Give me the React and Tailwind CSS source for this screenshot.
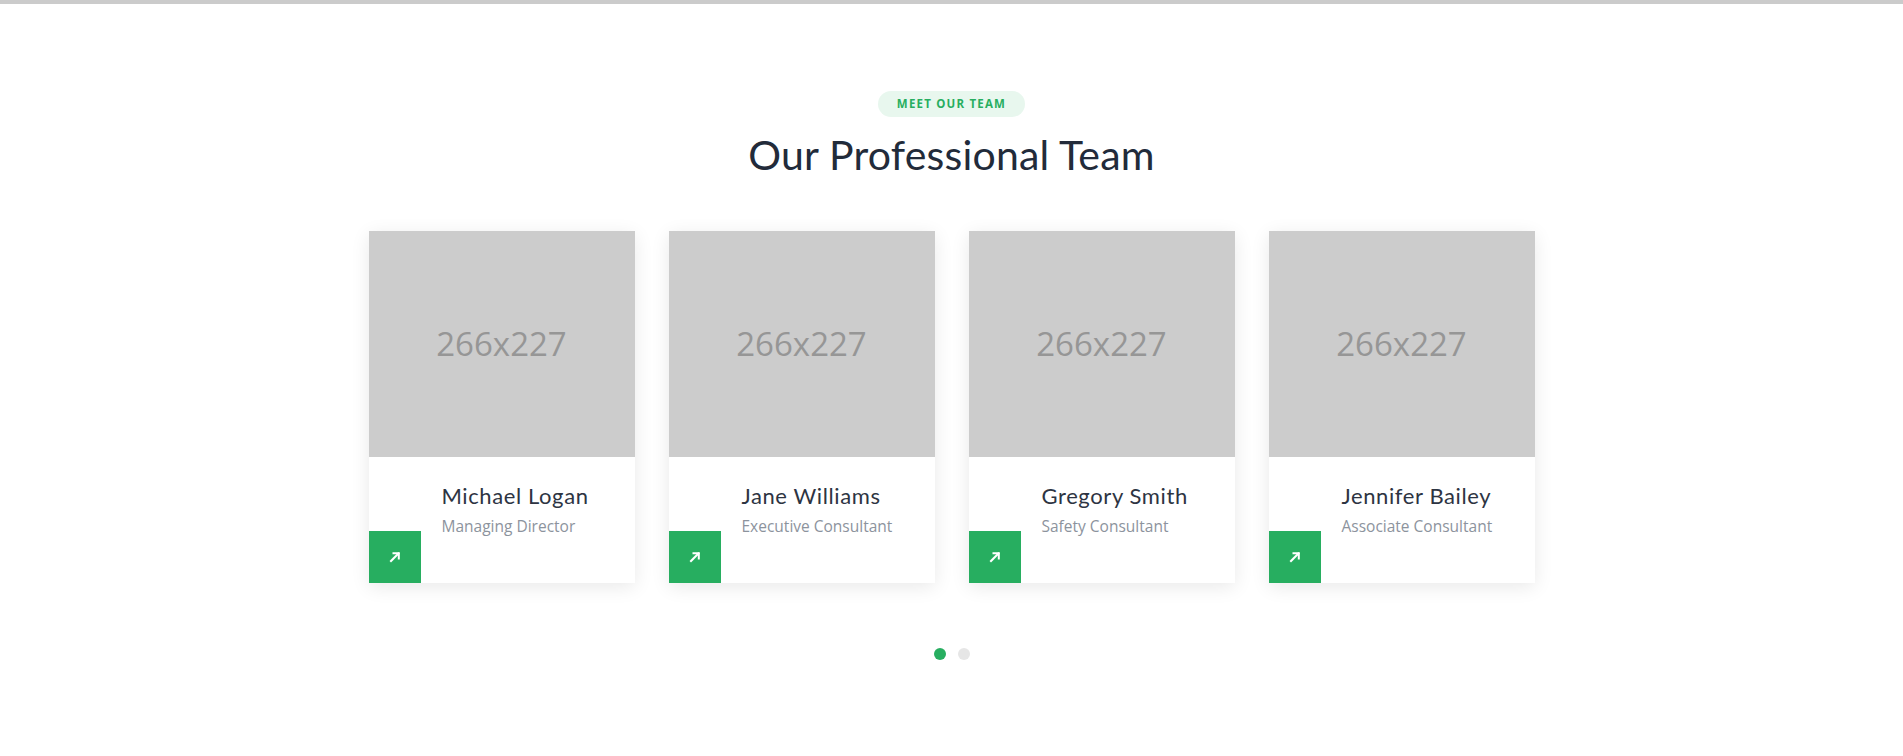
import React from 'react';

const TEAM = [
  { name: 'Michael Logan', role: 'Managing Director' },
  { name: 'Jane Williams', role: 'Executive Consultant' },
  { name: 'Gregory Smith', role: 'Safety Consultant' },
  { name: 'Jennifer Bailey', role: 'Associate Consultant' },
];

function ArrowIcon() {
  return (
    <svg width="12" height="12" viewBox="0 0 12 12" fill="none" stroke="white" strokeWidth="2" strokeLinecap="square">
      <path d="M2 10 L9.5 2.5" />
      <path d="M4.5 2.2 H9.8 V7.5" />
    </svg>
  );
}

function MemberCard({ member }) {
  return (
    <div className="w-[266px] bg-white shadow-[0_4px_18px_rgba(0,0,0,0.09)]">
      {/* Placeholder photo */}
      <div className="h-[226px] bg-[#cccccc] flex items-center justify-center">
        <span className="text-[33px] text-[#969696] font-['Open_Sans',sans-serif]">266x227</span>
      </div>

      {/* Info */}
      <div className="relative h-[126px]">
        <div className="pl-[73px] pt-[25px]">
          <h3 className="font-['Lato',sans-serif] text-[22px] leading-[28px] text-[#2d3442] tracking-[0.6px]">
            {member.name}
          </h3>
          <p className="font-['Open_Sans',sans-serif] text-[15.5px] leading-[22px] text-[#8c939d] mt-[5px]">
            {member.role}
          </p>
        </div>
        <a href="#" className="absolute left-0 bottom-0 w-[52px] h-[52px] bg-[#27ae60] flex items-center justify-center">
          <ArrowIcon />
        </a>
      </div>
    </div>
  );
}

export default function App() {
  return (
    <div className="min-h-[756px] bg-white">
      <div className="h-[4px] bg-[#cbcbcb]" />

      <section className="flex flex-col items-center pt-[87px]">
        <span className="h-[26px] px-[19px] rounded-full bg-[#e8f7ee] text-[#27ae60] font-['Open_Sans',sans-serif] font-bold text-[11.5px] tracking-[1.2px] uppercase flex items-center">
          Meet our team
        </span>
        <h2 className="mt-[12px] font-['Lato',sans-serif] text-[41px] leading-[52px] text-[#222b3a] tracking-[0.2px]">
          Our Professional Team
        </h2>

        <div className="mt-[50px] flex gap-[34px]">
          {TEAM.map((m) => (
            <MemberCard key={m.name} member={m} />
          ))}
        </div>

        <div className="mt-[65px] flex gap-[12px]">
          <span className="w-[12px] h-[12px] rounded-full bg-[#27ae60]" />
          <span className="w-[12px] h-[12px] rounded-full bg-[#e6e6e6]" />
        </div>
      </section>
    </div>
  );
}
